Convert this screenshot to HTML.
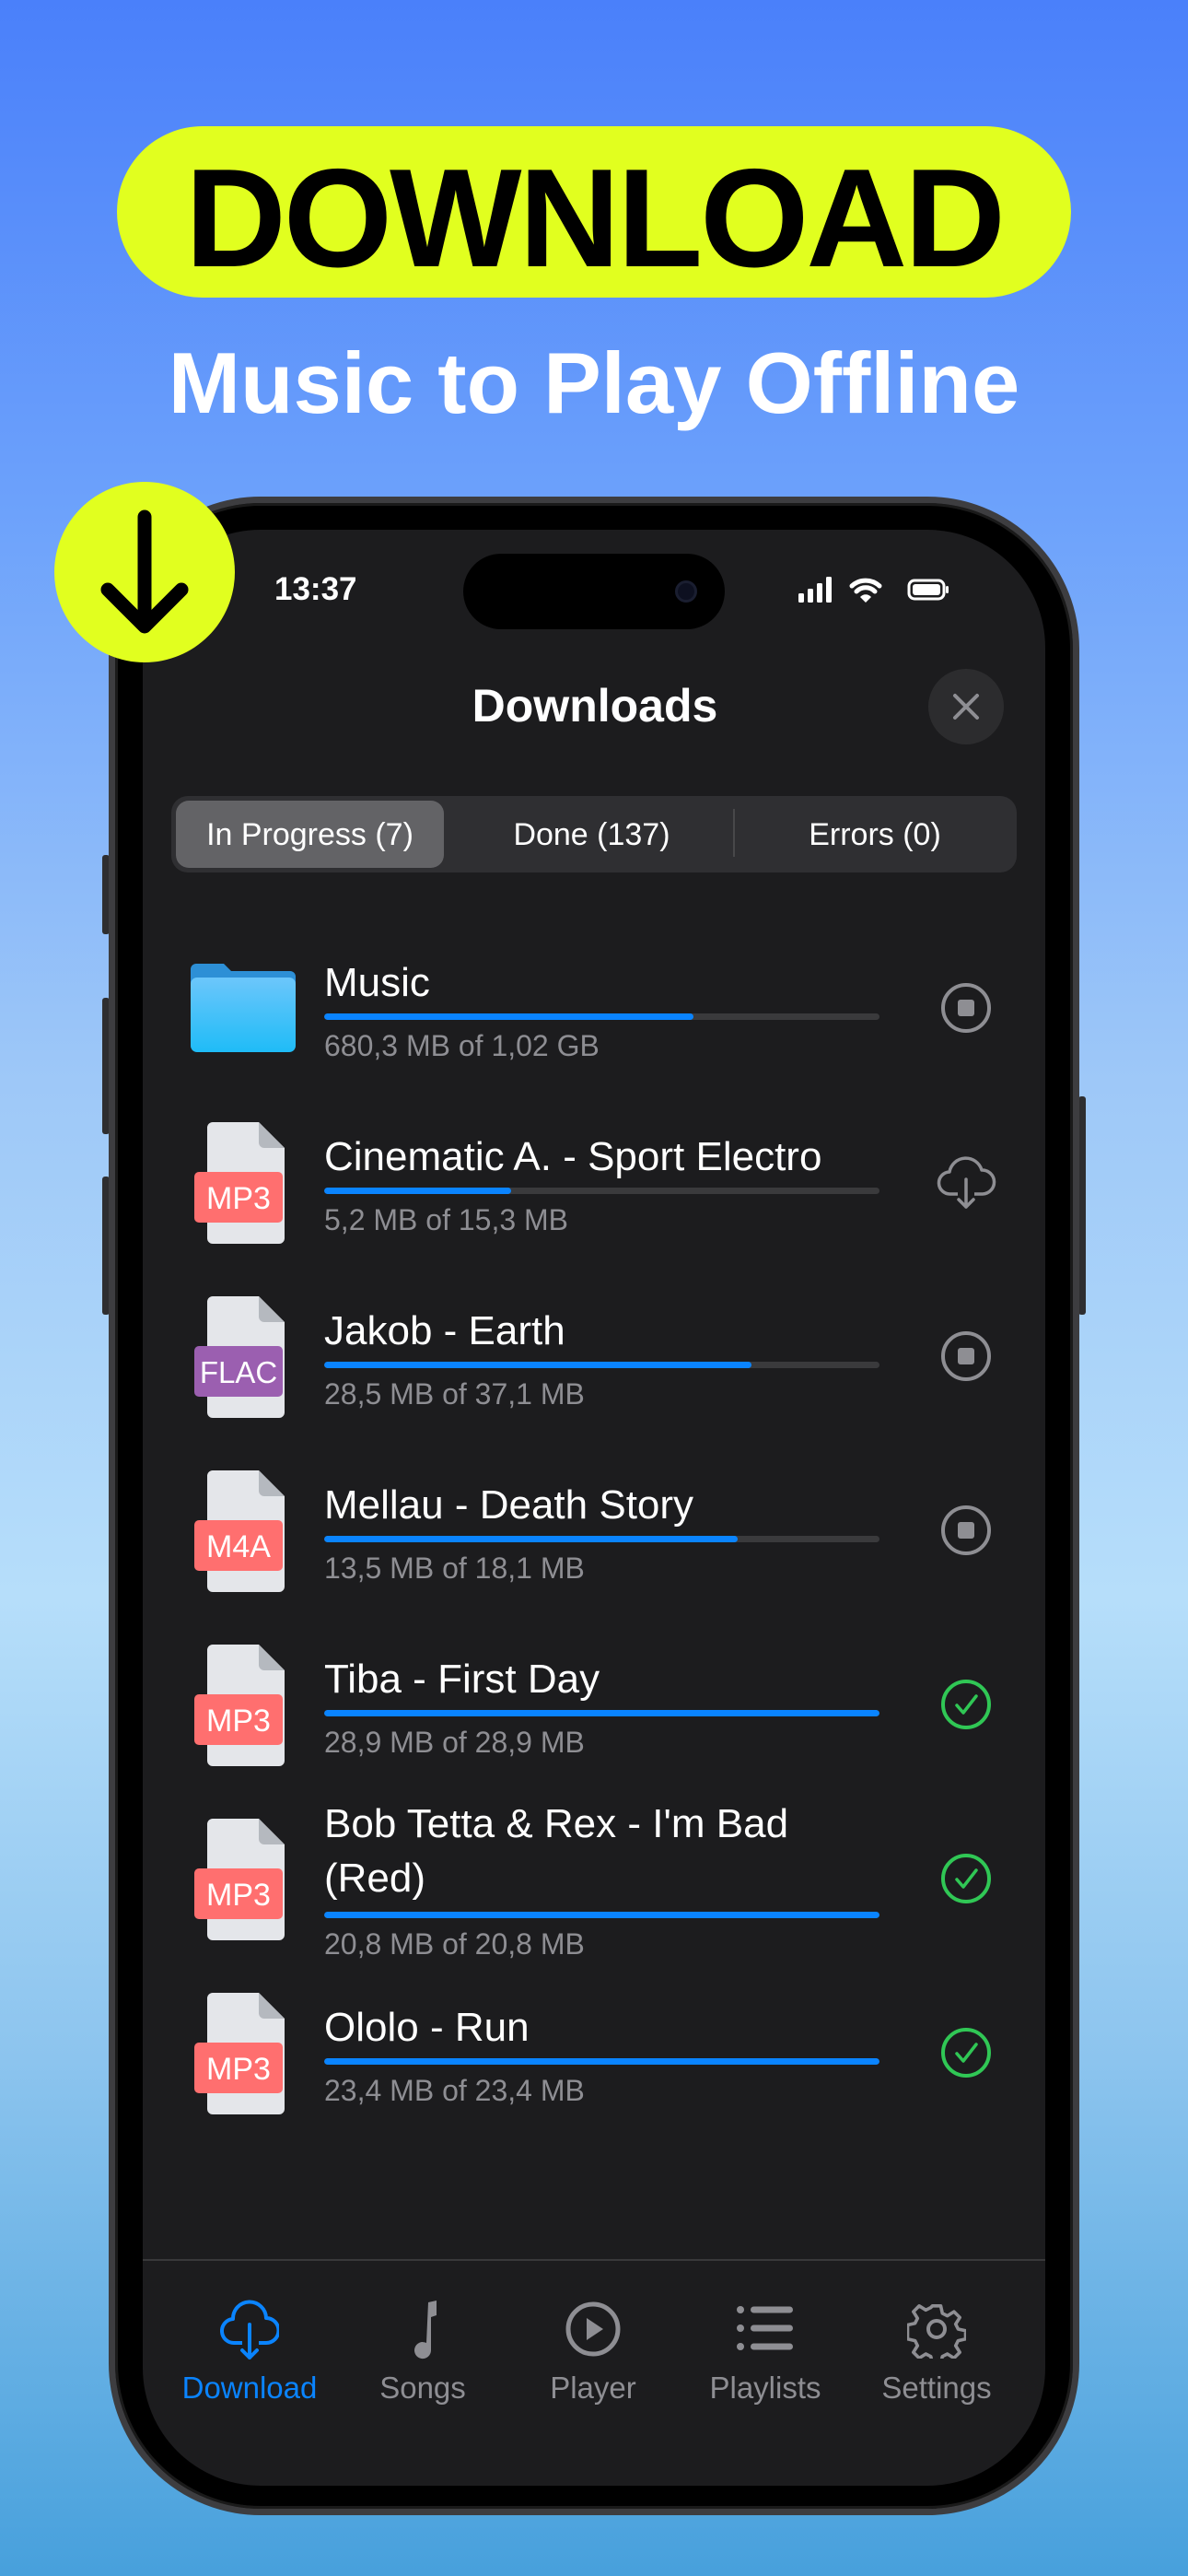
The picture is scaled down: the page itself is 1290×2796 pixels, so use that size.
<!DOCTYPE html>
<html><head><meta charset="utf-8">
<style>
*{margin:0;padding:0;box-sizing:border-box}
html,body{width:1290px;height:2796px;overflow:hidden}
body{position:relative;font-family:"Liberation Sans",sans-serif;background:linear-gradient(180deg,#4a80fa 0%,#6da2fb 20%,#9ec8f8 42%,#b6defa 62%,#8cc4ee 80%,#47a0dc 100%)}
.a{position:absolute}
.pill{left:127px;top:137px;width:1036px;height:186px;border-radius:93px;background:#e1ff1f}
.h1{left:0;width:1290px;text-align:center;top:161px;font-size:152px;line-height:152px;font-weight:bold;color:#000;letter-spacing:-3px}
.h2{left:0;width:1290px;text-align:center;top:369px;font-size:94px;line-height:94px;font-weight:bold;color:#fff}
.phone{left:118px;top:539px;width:1054px;height:2191px;border-radius:165px;background:#000;border:7px solid #3d3d40;box-shadow:inset 0 0 0 3px #1a1a1a}
.screen{left:155px;top:575px;width:980px;height:2123px;border-radius:128px;background:#1c1c1e;overflow:hidden}
.btn{background:#2e2e30;border-radius:3px}
.t{color:#fff;white-space:nowrap}
.title{font-size:44px;line-height:44px;color:#fff;left:352px;white-space:nowrap}
.sub{font-size:32px;line-height:32px;color:#8e8e93;left:352px;white-space:nowrap}
.track{left:352px;width:603px;height:7px;border-radius:4px;background:#3a3a3c;overflow:hidden}
.fill{height:7px;background:#0a84ff;border-radius:4px}
.seg{font-size:34px;line-height:34px;color:#fff;text-align:center}
.tab{font-size:33px;line-height:33px;color:#8e8e93;text-align:center;width:200px}
</style></head><body>
<div class="a pill"></div>
<div class="a h1">DOWNLOAD</div>
<div class="a h2">Music to Play Offline</div>

<div class="a btn" style="left:111px;top:928px;width:8px;height:86px"></div>
<div class="a btn" style="left:111px;top:1083px;width:8px;height:148px"></div>
<div class="a btn" style="left:111px;top:1277px;width:8px;height:150px"></div>
<div class="a btn" style="left:1171px;top:1190px;width:8px;height:237px"></div>
<div class="a phone"></div>
<div class="a screen"></div>

<div class="a t" style="left:298px;top:622px;font-size:35px;line-height:35px;font-weight:bold">13:37</div>
<div class="a" style="left:503px;top:601px;width:284px;height:82px;border-radius:41px;background:#000"></div>
<div class="a" style="left:733px;top:630px;width:24px;height:24px;border-radius:12px;background:#0d1020;border:3px solid #1a1e30"></div>
<svg class="a" style="left:865px;top:622px" width="175" height="34" viewBox="0 0 175 34">
<rect x="2" y="22" width="6" height="10" rx="1.5" fill="#fff"/><rect x="12" y="17" width="6" height="15" rx="1.5" fill="#fff"/><rect x="22" y="11" width="6" height="21" rx="1.5" fill="#fff"/><rect x="32" y="4" width="6" height="28" rx="1.5" fill="#fff"/>
<path d="M60 14a22 22 0 0 1 30 0M65 20a14 14 0 0 1 20 0" stroke="#fff" stroke-width="5" fill="none" stroke-linecap="round"/><path d="M69 26l6 6 6-6a8 8 0 0 0-12 0z" fill="#fff"/>
<rect x="122" y="8" width="38" height="20" rx="6" fill="none" stroke="#fff" stroke-width="3"/><rect x="126" y="12" width="30" height="12" rx="3" fill="#fff"/><rect x="162" y="14" width="3" height="8" rx="1.5" fill="#fff"/>
</svg>

<div class="a" style="left:59px;top:523px;width:196px;height:196px;border-radius:98px;background:#e1ff1f"></div>
<svg class="a" style="left:59px;top:523px" width="196" height="196" viewBox="0 0 196 196">
<path d="M98 38v118M58 117l40 40 40-40" stroke="#000" stroke-width="15" fill="none" stroke-linecap="round" stroke-linejoin="round"/>
</svg>

<div class="a t" style="left:0;width:1290px;text-align:center;top:741px;font-size:50px;line-height:50px;font-weight:bold;padding-left:2px">Downloads</div>
<div class="a" style="left:1008px;top:726px;width:82px;height:82px;border-radius:41px;background:#2c2c2e"></div>
<svg class="a" style="left:1008px;top:726px" width="82" height="82"><path d="M29 29l24 24M53 29L29 53" stroke="#8e8e93" stroke-width="4" stroke-linecap="round"/></svg>

<div class="a" style="left:186px;top:864px;width:918px;height:83px;border-radius:18px;background:#2f2f32"></div>
<div class="a" style="left:191px;top:869px;width:291px;height:73px;border-radius:14px;background:#636366"></div>
<div class="a" style="left:796px;top:878px;width:2px;height:52px;background:#48484a"></div>
<div class="a seg" style="left:191px;width:291px;top:889px">In Progress (7)</div>
<div class="a seg" style="left:490px;width:305px;top:889px">Done (137)</div>
<div class="a seg" style="left:800px;width:300px;top:889px">Errors (0)</div>

<svg class="a" style="left:207px;top:1044px" width="114" height="98" viewBox="0 0 114 98">
<path d="M0 8a6 6 0 0 1 6-6h30l8 8h64a6 6 0 0 1 6 6v20H0z" fill="#2d8fd6"/>
<rect x="0" y="17" width="114" height="81" rx="7" fill="url(#fg)"/>
<defs><linearGradient id="fg" x1="0" y1="0" x2="0" y2="1"><stop offset="0" stop-color="#6cc6fb"/><stop offset="1" stop-color="#1fbcf7"/></linearGradient></defs>
</svg>
<div class="a title" style="top:1045px">Music</div>
<div class="a track" style="top:1100px"><div class="fill" style="width:66.5%"></div></div>
<div class="a sub" style="top:1119px">680,3 MB of 1,02 GB</div>

<svg class="a" style="left:211px;top:1218px" width="110" height="132" viewBox="0 0 110 132">
<path d="M14 0h56l28 28v98a6 6 0 0 1-6 6H20a6 6 0 0 1-6-6V6a6 6 0 0 1 6-6z" fill="#e4e6ea"/><path d="M70 0l28 28H76a6 6 0 0 1-6-6z" fill="#b5b9bf"/>
<rect x="0" y="54" width="96" height="55" rx="5" fill="#ff6f6f"/><text x="48" y="94" text-anchor="middle" font-family="Liberation Sans" font-size="34" fill="#fff">MP3</text></svg>
<div class="a title" style="top:1234px">Cinematic A. - Sport Electro</div>
<div class="a track" style="top:1289px"><div class="fill" style="width:33.7%"></div></div>
<div class="a sub" style="top:1308px">5,2 MB of 15,3 MB</div>

<svg class="a" style="left:211px;top:1407px" width="110" height="132" viewBox="0 0 110 132">
<path d="M14 0h56l28 28v98a6 6 0 0 1-6 6H20a6 6 0 0 1-6-6V6a6 6 0 0 1 6-6z" fill="#e4e6ea"/><path d="M70 0l28 28H76a6 6 0 0 1-6-6z" fill="#b5b9bf"/>
<rect x="0" y="54" width="96" height="55" rx="5" fill="#9b5fb0"/><text x="48" y="94" text-anchor="middle" font-family="Liberation Sans" font-size="33" fill="#fff">FLAC</text></svg>
<div class="a title" style="top:1423px">Jakob - Earth</div>
<div class="a track" style="top:1478px"><div class="fill" style="width:77%"></div></div>
<div class="a sub" style="top:1497px">28,5 MB of 37,1 MB</div>

<svg class="a" style="left:211px;top:1596px" width="110" height="132" viewBox="0 0 110 132">
<path d="M14 0h56l28 28v98a6 6 0 0 1-6 6H20a6 6 0 0 1-6-6V6a6 6 0 0 1 6-6z" fill="#e4e6ea"/><path d="M70 0l28 28H76a6 6 0 0 1-6-6z" fill="#b5b9bf"/>
<rect x="0" y="54" width="96" height="55" rx="5" fill="#ff6f6f"/><text x="48" y="94" text-anchor="middle" font-family="Liberation Sans" font-size="34" fill="#fff">M4A</text></svg>
<div class="a title" style="top:1612px">Mellau - Death Story</div>
<div class="a track" style="top:1667px"><div class="fill" style="width:74.5%"></div></div>
<div class="a sub" style="top:1686px">13,5 MB of 18,1 MB</div>

<svg class="a" style="left:211px;top:1785px" width="110" height="132" viewBox="0 0 110 132">
<path d="M14 0h56l28 28v98a6 6 0 0 1-6 6H20a6 6 0 0 1-6-6V6a6 6 0 0 1 6-6z" fill="#e4e6ea"/><path d="M70 0l28 28H76a6 6 0 0 1-6-6z" fill="#b5b9bf"/>
<rect x="0" y="54" width="96" height="55" rx="5" fill="#ff6f6f"/><text x="48" y="94" text-anchor="middle" font-family="Liberation Sans" font-size="34" fill="#fff">MP3</text></svg>
<div class="a title" style="top:1801px">Tiba - First Day</div>
<div class="a track" style="top:1856px"><div class="fill" style="width:100%"></div></div>
<div class="a sub" style="top:1875px">28,9 MB of 28,9 MB</div>

<svg class="a" style="left:211px;top:1974px" width="110" height="132" viewBox="0 0 110 132">
<path d="M14 0h56l28 28v98a6 6 0 0 1-6 6H20a6 6 0 0 1-6-6V6a6 6 0 0 1 6-6z" fill="#e4e6ea"/><path d="M70 0l28 28H76a6 6 0 0 1-6-6z" fill="#b5b9bf"/>
<rect x="0" y="54" width="96" height="55" rx="5" fill="#ff6f6f"/><text x="48" y="94" text-anchor="middle" font-family="Liberation Sans" font-size="34" fill="#fff">MP3</text></svg>
<div class="a title" style="top:1958px">Bob Tetta &amp; Rex - I'm Bad</div>
<div class="a title" style="top:2017px">(Red)</div>
<div class="a track" style="top:2075px"><div class="fill" style="width:100%"></div></div>
<div class="a sub" style="top:2094px">20,8 MB of 20,8 MB</div>

<svg class="a" style="left:211px;top:2163px" width="110" height="132" viewBox="0 0 110 132">
<path d="M14 0h56l28 28v98a6 6 0 0 1-6 6H20a6 6 0 0 1-6-6V6a6 6 0 0 1 6-6z" fill="#e4e6ea"/><path d="M70 0l28 28H76a6 6 0 0 1-6-6z" fill="#b5b9bf"/>
<rect x="0" y="54" width="96" height="55" rx="5" fill="#ff6f6f"/><text x="48" y="94" text-anchor="middle" font-family="Liberation Sans" font-size="34" fill="#fff">MP3</text></svg>
<div class="a title" style="top:2179px">Ololo - Run</div>
<div class="a track" style="top:2234px"><div class="fill" style="width:100%"></div></div>
<div class="a sub" style="top:2253px">23,4 MB of 23,4 MB</div>

<svg class="a" style="left:1019px;top:1064px" width="60" height="60"><circle cx="30" cy="30" r="25" fill="none" stroke="#8e8e93" stroke-width="4"/><rect x="21" y="21" width="18" height="18" rx="3" fill="#8e8e93"/></svg>
<svg class="a" style="left:1014px;top:1248px" width="70" height="70" viewBox="0 0 70 70"><path d="M26 48H18a12 12 0 0 1-1-24 18 18 0 0 1 35-2 12 12 0 0 1 1 26h-9" fill="none" stroke="#8e8e93" stroke-width="3.5" stroke-linejoin="round"/><path d="M35 32v30M27 54l8 8 8-8" fill="none" stroke="#8e8e93" stroke-width="3.5" stroke-linecap="round" stroke-linejoin="round"/></svg>
<svg class="a" style="left:1019px;top:1442px" width="60" height="60"><circle cx="30" cy="30" r="25" fill="none" stroke="#8e8e93" stroke-width="4"/><rect x="21" y="21" width="18" height="18" rx="3" fill="#8e8e93"/></svg>
<svg class="a" style="left:1019px;top:1631px" width="60" height="60"><circle cx="30" cy="30" r="25" fill="none" stroke="#8e8e93" stroke-width="4"/><rect x="21" y="21" width="18" height="18" rx="3" fill="#8e8e93"/></svg>
<svg class="a" style="left:1019px;top:1820px" width="60" height="60"><circle cx="30" cy="30" r="25" fill="none" stroke="#30c755" stroke-width="4"/><path d="M20 31l7 8 14-18" fill="none" stroke="#30c755" stroke-width="3.5" stroke-linecap="round" stroke-linejoin="round"/></svg>
<svg class="a" style="left:1019px;top:2009px" width="60" height="60"><circle cx="30" cy="30" r="25" fill="none" stroke="#30c755" stroke-width="4"/><path d="M20 31l7 8 14-18" fill="none" stroke="#30c755" stroke-width="3.5" stroke-linecap="round" stroke-linejoin="round"/></svg>
<svg class="a" style="left:1019px;top:2198px" width="60" height="60"><circle cx="30" cy="30" r="25" fill="none" stroke="#30c755" stroke-width="4"/><path d="M20 31l7 8 14-18" fill="none" stroke="#30c755" stroke-width="3.5" stroke-linecap="round" stroke-linejoin="round"/></svg>

<div class="a" style="left:155px;top:2452px;width:980px;height:2px;background:#38383a"></div>
<svg class="a" style="left:239px;top:2493px" width="64" height="72" viewBox="0 0 64 72"><path d="M24 50H16a13 13 0 0 1-2-26 18 18 0 0 1 36-1 13 13 0 0 1 0 27h-8" fill="none" stroke="#0a84ff" stroke-width="4" stroke-linejoin="round"/><path d="M32 30v36M24 58l8 8 8-8" fill="none" stroke="#0a84ff" stroke-width="4" stroke-linecap="round" stroke-linejoin="round"/></svg>
<svg class="a" style="left:427px;top:2493px" width="64" height="72" viewBox="0 0 64 72"><path d="M38 6l9-2v16l-6 2v36a9 9 0 1 1-5-8z" fill="#8e8e93"/></svg>
<svg class="a" style="left:612px;top:2495px" width="64" height="66" viewBox="0 0 64 66"><circle cx="32" cy="33" r="27" fill="none" stroke="#8e8e93" stroke-width="5"/><path d="M25 21v24l18-12z" fill="#8e8e93"/></svg>
<svg class="a" style="left:799px;top:2497px" width="64" height="62" viewBox="0 0 64 62"><g fill="#8e8e93"><circle cx="5" cy="10" r="4"/><circle cx="5" cy="30" r="4"/><circle cx="5" cy="50" r="4"/><rect x="16" y="6.5" width="46" height="7" rx="3.5"/><rect x="16" y="26.5" width="46" height="7" rx="3.5"/><rect x="16" y="46.5" width="46" height="7" rx="3.5"/></g></svg>
<svg class="a" style="left:985px;top:2496px" width="64" height="64" viewBox="0 0 64 64"><path d="M27 4h10l2 9 6 3 8-5 7 7-5 8 3 6 9 2v10l-9 2-3 6 5 8-7 7-8-5-6 3-2 9H27l-2-9-6-3-8 5-7-7 5-8-3-6-9-2V27l9-2 3-6-5-8 7-7 8 5 6-3z" fill="none" stroke="#8e8e93" stroke-width="4" stroke-linejoin="round" transform="translate(32 32) scale(0.9) translate(-32 -32)"/><circle cx="32" cy="32" r="9" fill="none" stroke="#8e8e93" stroke-width="4"/></svg>
<div class="a tab" style="left:171px;top:2575px;color:#0a84ff">Download</div>
<div class="a tab" style="left:359px;top:2575px">Songs</div>
<div class="a tab" style="left:544px;top:2575px">Player</div>
<div class="a tab" style="left:731px;top:2575px">Playlists</div>
<div class="a tab" style="left:917px;top:2575px">Settings</div>
</body></html>
